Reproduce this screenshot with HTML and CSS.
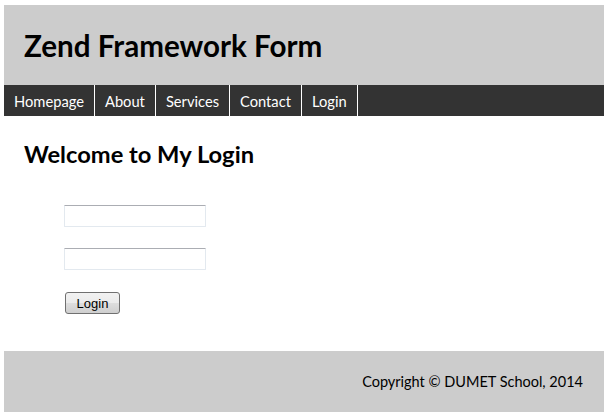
FILE: index.html
```html
<!DOCTYPE html>
<html>
<head>
<meta charset="utf-8">
<title>Zend Framework Form</title>
<link rel="stylesheet" href="styles.css">
</head>
<body>
<div class="page">
  <header class="header">
    <h1 class="site-title">Zend Framework Form</h1>
  </header>
  <nav class="nav">
    <a class="nav-item" href="#">Homepage</a>
    <a class="nav-item" href="#">About</a>
    <a class="nav-item" href="#">Services</a>
    <a class="nav-item" href="#">Contact</a>
    <a class="nav-item" href="#">Login</a>
  </nav>
  <main class="content">
    <h2 class="page-title">Welcome to My Login</h2>
    <form class="login-form">
      <div class="field"><input class="text-input" type="text"></div>
      <div class="field"><input class="text-input" type="password"></div>
      <div class="field"><button class="btn" type="button">Login</button></div>
    </form>
  </main>
  <footer class="footer">Copyright © DUMET School, 2014</footer>
</div>
</body>
</html>
```

FILE: styles.css
```css
html, body {
  margin: 0;
  padding: 0;
  background: #fff;
}
body {
  font-family: Lato, "Open Sans", sans-serif;
  color: #000;
}
.page {
  width: 600px;
  margin: 5px auto 0;
}
.header {
  background: #cccccc;
  height: 80px;
  display: flex;
  align-items: center;
  padding-left: 20px;
}
.site-title {
  margin: 0;
  font-size: 29.6px;
  font-weight: bold;
  line-height: 1;
  padding-top: 2px;
}
.nav {
  background: #333333;
  height: 31px;
  display: flex;
}
.nav-item {
  color: #fff;
  text-decoration: none;
  font-size: 14.7px;
  padding: 0 10px;
  border-right: 1px solid #fff;
  display: flex;
  align-items: center;
}
.content {
  padding: 24px 20px 37px;
}
.page-title {
  margin: 0;
  font-size: 23.7px;
  font-weight: bold;
  line-height: 28px;
}
.login-form {
  padding: 37px 0 0 40px;
  display: flex;
  flex-direction: column;
  gap: 21px;
}
.field {
  display: flex;
}
.text-input {
  width: 142px;
  height: 22px;
  box-sizing: border-box;
  border: 1px solid #e3e9ef;
  border-top-color: #abadb3;
  border-radius: 1px;
  margin: 0;
  padding: 1px 2px;
  font-family: "Liberation Sans", sans-serif;
  font-size: 13px;
}
.btn {
  margin: 1px 0 0 1px;
  width: 55px;
  height: 22px;
  box-sizing: border-box;
  border: 1px solid #707070;
  border-radius: 3px;
  background: linear-gradient(#f2f2f2 0%, #ebebeb 50%, #dddddd 51%, #cfcfcf 100%);
  font-family: "Liberation Sans", sans-serif;
  font-size: 13px;
  color: #000;
  padding: 0;
}
.footer {
  background: #cccccc;
  height: 61px;
  display: flex;
  align-items: center;
  justify-content: flex-end;
  padding-right: 21px;
  font-size: 14.5px;
}
```
